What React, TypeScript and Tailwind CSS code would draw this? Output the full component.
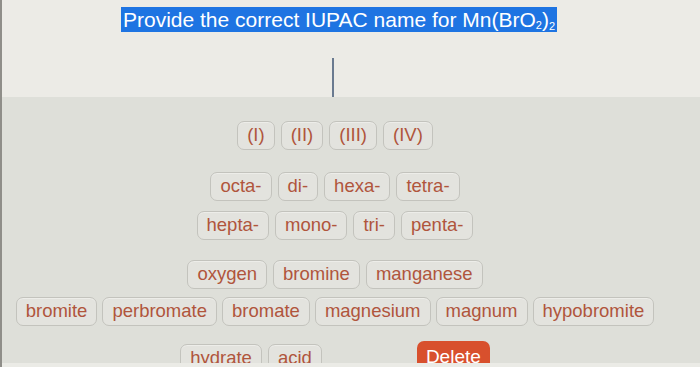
import React from "react";

const font = { fontFamily: '"Liberation Sans", Arial, Helvetica, sans-serif' };

function Tile({ label }: { label: string }) {
  return (
    <div className="h-[29px] px-[9px] rounded-[7px] border border-[#c3c3bd] bg-[#e3e3de] text-[18.5px] text-[#b0553c] leading-none flex items-center shadow-[inset_0_1px_0_rgba(255,255,255,0.35)]">
      {label}
    </div>
  );
}

export default function App() {
  const numerals = ["(I)", "(II)", "(III)", "(IV)"];
  const prefixes = ["octa-", "di-", "hexa-", "tetra-", "hepta-", "mono-", "tri-", "penta-"];
  const elements1 = ["oxygen", "bromine", "manganese"];
  const elements2 = ["bromite", "perbromate", "bromate", "magnesium", "magnum", "hypobromite"];
  return (
    <div className="w-[700px] h-[367px] overflow-hidden flex flex-col border-l-2 border-[#8f8e89]" style={font}>
      <div className="h-[97px] bg-[#ecebe6] flex flex-col shrink-0">
        <div className="pt-[7px] pl-[119px]">
          <div className="inline-block bg-[#1e74e2] h-[25px] leading-[25px] text-[21px] text-white px-[2px] whitespace-nowrap">
            Provide the correct IUPAC name for Mn(BrO<span className="text-[11px] align-[-2px]">2</span>)<span className="text-[11px] align-[-3px]">2</span>
          </div>
        </div>
        <div className="ml-[330px] mt-[24px] w-[2px] h-[41px] bg-[#6a7a90]" />
      </div>
      <div className="h-[266px] bg-[#dedfd9] overflow-hidden shrink-0">
        <div className="w-[666px] flex flex-col items-center pt-[24px]">
          <div className="flex gap-[6px]">
            {numerals.map((n) => (
              <Tile key={n} label={n} />
            ))}
          </div>
          <div className="mt-[22px] w-[290px] flex flex-wrap justify-center gap-x-[6px] gap-y-[10px]">
            {prefixes.map((n) => (
              <Tile key={n} label={n} />
            ))}
          </div>
          <div className="mt-[20px] flex flex-col items-center gap-[8px]">
            <div className="flex gap-[6px]">
              {elements1.map((n) => (
                <Tile key={n} label={n} />
              ))}
            </div>
            <div className="flex gap-[5px]">
              {elements2.map((n) => (
                <Tile key={n} label={n} />
              ))}
            </div>
          </div>
          <div className="mt-[18px] flex items-start">
            <Tile label="hydrate" />
            <div className="ml-[6px]">
              <Tile label="acid" />
            </div>
            <div className="ml-[95px] -mt-[3px] h-[30px] px-[9px] rounded-[7px] bg-[#d8502d] text-white text-[19px] leading-none flex items-center">
              Delete
            </div>
          </div>
        </div>
      </div>
      <div className="flex-1 bg-[#ebebe6]" />
    </div>
  );
}
